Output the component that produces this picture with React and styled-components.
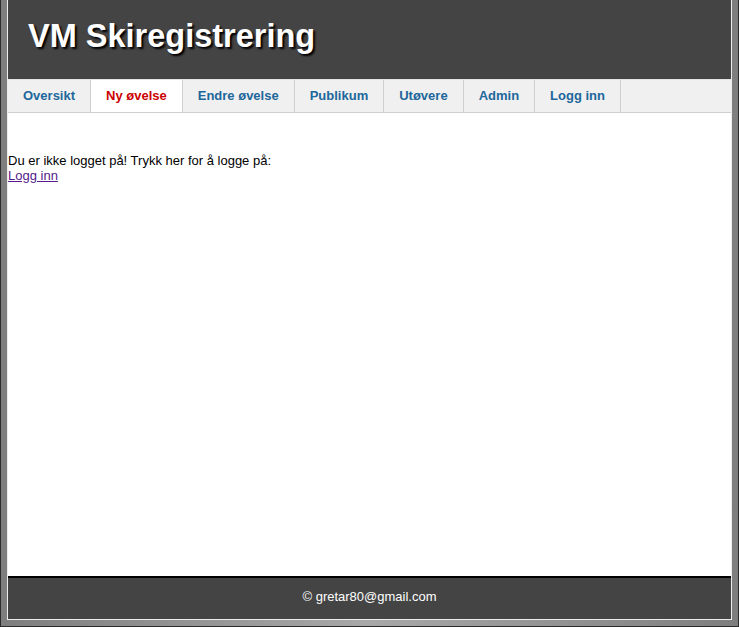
import React from 'react';
import styled, { createGlobalStyle } from 'styled-components';

const GlobalStyle = createGlobalStyle`
  html, body {
    margin: 0;
    padding: 0;
    height: 100%;
  }
  body {
    font-family: 'Liberation Sans', Arial, sans-serif;
    font-size: 13px;
  }
  #root {
    height: 100%;
  }
`;

const menuItems = ['Oversikt', 'Ny øvelse', 'Endre øvelse', 'Publikum', 'Utøvere', 'Admin', 'Logg inn'];

const App = () => (
  <>
    <GlobalStyle />
    <WindowFrame>
      <Page>
        <Header>
          <Title>VM Skiregistrering</Title>
        </Header>
        <Menu>
          {menuItems.map((item) => (
            <MenuItem key={item} active={item === 'Ny øvelse'}>
              {item}
            </MenuItem>
          ))}
        </Menu>
        <Main>
          Du er ikke logget på! Trykk her for å logge på:
          <br />
          <LoginLink href='#'>Logg inn</LoginLink>
        </Main>
        <Footer>© gretar80@gmail.com</Footer>
      </Page>
    </WindowFrame>
  </>
);

const WindowFrame = styled.div`
  box-sizing: border-box;
  height: 100%;
  display: flex;
  padding: 0 6px 6px;
  border: 1px solid #2b2b2b;
  border-top: none;
  background: linear-gradient(90deg, #7e7e7e, #a8a8a8 50%, #7e7e7e);
`;

const Page = styled.div`
  flex: 1;
  display: flex;
  flex-direction: column;
  background: #fff;
  border: 1px solid #ececec;
  border-top: none;
`;

const Header = styled.header`
  height: 79px;
  box-sizing: border-box;
  padding: 20px 20px 0;
  background: #444;
`;

const Title = styled.h1`
  margin: 0;
  font-size: 32.5px;
  line-height: 32px;
  font-weight: bold;
  color: #fff;
  text-shadow: 2px 2px 2px #000;
`;

const Menu = styled.nav`
  display: flex;
  background: #f0f0f0;
  border-top: 1px solid #e4e4e4;
  border-bottom: 1px solid #cfcfcf;
`;

const MenuItem = styled.a`
  padding: 0 15px;
  height: 32px;
  line-height: 32px;
  font-size: 13px;
  font-weight: bold;
  text-decoration: none;
  border-right: 1px solid #cfcfcf;
  color: ${(p) => (p.active ? '#cc0000' : '#20679b')};
  background: ${(p) => (p.active ? '#fff' : 'transparent')};
`;

const Main = styled.main`
  flex: 1;
  padding-top: 40px;
  font-size: 13px;
  line-height: 15px;
  color: #000;
`;

const LoginLink = styled.a`
  color: #551a8b;
`;

const Footer = styled.footer`
  height: 43px;
  box-sizing: border-box;
  padding-top: 11px;
  border-top: 2px solid #000;
  background: #444;
  color: #fff;
  text-align: center;
  font-size: 13px;
  line-height: 15px;
`;

export default App;
